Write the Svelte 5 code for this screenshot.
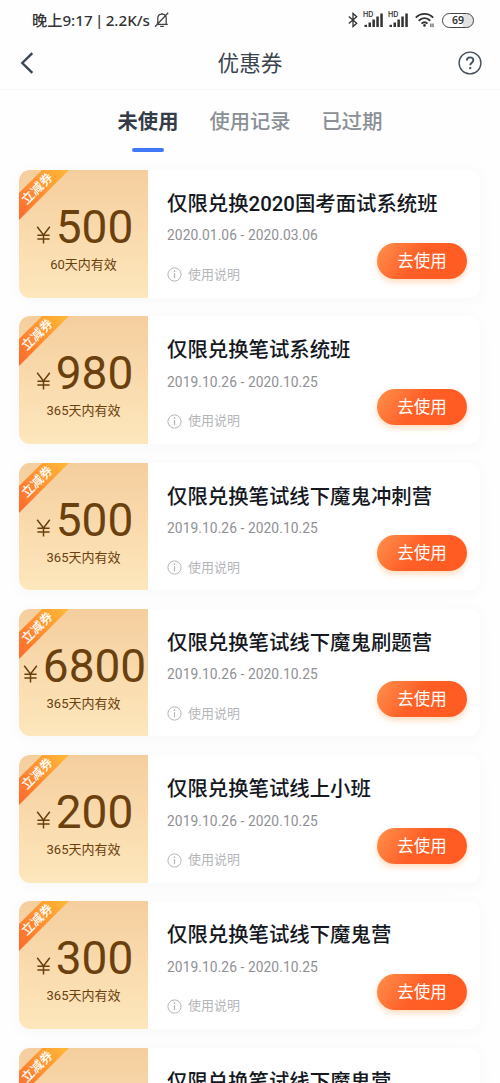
<script lang="ts">
  type Coupon = { amount: number; days: number; title: string; date: string };

  const tabs = ['未使用', '使用记录', '已过期'];
  let active = $state(0);

  const coupons: Coupon[] = [
    { amount: 500, days: 60, title: '仅限兑换2020国考面试系统班', date: '2020.01.06 - 2020.03.06' },
    { amount: 980, days: 365, title: '仅限兑换笔试系统班', date: '2019.10.26 - 2020.10.25' },
    { amount: 500, days: 365, title: '仅限兑换笔试线下魔鬼冲刺营', date: '2019.10.26 - 2020.10.25' },
    { amount: 6800, days: 365, title: '仅限兑换笔试线下魔鬼刷题营', date: '2019.10.26 - 2020.10.25' },
    { amount: 200, days: 365, title: '仅限兑换笔试线上小班', date: '2019.10.26 - 2020.10.25' },
    { amount: 300, days: 365, title: '仅限兑换笔试线下魔鬼营', date: '2019.10.26 - 2020.10.25' },
    { amount: 300, days: 365, title: '仅限兑换笔试线下魔鬼营', date: '2019.10.26 - 2020.10.25' }
  ];
</script>

{#snippet signal()}
  <span class="signal">
    <span class="hd">HD</span>
    <svg width="19" height="14" viewBox="0 0 19 14" fill="#333">
      <rect x="0.5" y="11.8" width="2.5" height="2.2" />
      <rect x="4.5" y="9.5" width="2.5" height="4.5" />
      <rect x="8.4" y="6.5" width="2.5" height="7.5" />
      <rect x="12.3" y="3.5" width="2.5" height="10.5" />
      <rect x="16.3" y="0.5" width="2.5" height="13.5" />
    </svg>
  </span>
{/snippet}

<div class="screen">
  <div class="status">
    <span class="clock">晚上9:17 | 2.2K/s</span>
    <svg class="bell" width="16" height="16" viewBox="0 0 16 16" fill="none" stroke="#444" stroke-width="1.3">
      <path d="M2.2 12.3h11.6M3.8 12V6.6C3.8 4 5.5 2.2 8 2.2s4.2 1.8 4.2 4.4V12M8 .9v1.3M6.2 14.4h3.6M1 14.8L14.2 .8" />
    </svg>
    <div class="indicators">
      <svg class="bluetooth" width="10" height="16" viewBox="0 0 10 16" fill="none" stroke="#333" stroke-width="1.3">
        <path d="M.8 4.5L8.7 11.2 5 14.6V1.4l3.7 3.4L.8 11.5" />
      </svg>
      {@render signal()}
      {@render signal()}
      <svg class="wifi" width="20" height="16" viewBox="0 0 20 16" fill="none" stroke="#333" stroke-width="1.9">
        <path d="M.8 5.6c5-5 12.4-5 17.4 0M3.7 8.7c3.5-3.3 8.1-3.3 11.6 0M6.5 11.6c1.9-1.7 4.1-1.7 6 0" />
        <circle cx="9.5" cy="13.4" r="1.3" fill="#333" stroke="none" />
        <path d="M15.9 11.5v3.6M18 11.5v3.6" stroke-width="1" />
      </svg>
      <span class="battery">69</span>
    </div>
  </div>

  <header>
    <svg width="14" height="22" viewBox="0 0 14 22" fill="none" stroke="#3b4653" stroke-width="2.4">
      <path d="M12.3 1.2L2.3 11l10 9.8" />
    </svg>
    <h1>优惠券</h1>
    <svg width="24" height="24" viewBox="0 0 24 24" fill="none" stroke="#44505c">
      <circle cx="12" cy="12" r="10.9" stroke-width="1.4" />
      <path d="M8.9 9.5C8.9 5.3 15.3 5.4 15.3 9.2c0 2.5-3.1 2.5-3.1 5.1" stroke-width="1.9" />
      <circle cx="12.2" cy="17.1" r="1.2" fill="#44505c" stroke="none" />
    </svg>
  </header>

  <nav>
    {#each tabs as tab, i}
      <button class="tab" class:active={active === i} onclick={() => (active = i)}>{tab}</button>
    {/each}
  </nav>

  <main>
    {#each coupons as coupon}
      <article>
        <div class="value">
          <span class="ribbon">立减券</span>
          <div class="amount">
            <svg width="15" height="18" viewBox="0 0 15 18" fill="none" stroke="#6a400f" stroke-width="1.5">
              <path d="M1.2 .8l6.3 8.2 6.3-8.2M7.5 9v8.5M1.4 9.2h12.2M1.4 13.1h12.2" />
            </svg>
            <span>{coupon.amount}</span>
          </div>
          <p>{coupon.days}天内有效</p>
        </div>
        <div class="info">
          <h2>{coupon.title}</h2>
          <p class="date">{coupon.date}</p>
          <div class="note">
            <svg width="15" height="15" viewBox="0 0 15 15" fill="none" stroke="#b5b6ba">
              <circle cx="7.5" cy="7.5" r="6.6" />
              <path d="M7.5 6.2v5" stroke-width="1.3" />
              <circle cx="7.5" cy="4.2" r=".9" fill="#b5b6ba" stroke="none" />
            </svg>
            <span>使用说明</span>
          </div>
        </div>
        <button class="use">去使用</button>
      </article>
    {/each}
  </main>
</div>

<style>
  :global(body) {
    margin: 0;
    background: #fefefe;
  }

  .screen {
    width: 500px;
    height: 1083px;
    overflow: hidden;
    background: #fefefe;
    font-family: Roboto, 'Noto Sans CJK SC', sans-serif;
  }

  h1,
  h2,
  p {
    margin: 0;
    font-weight: 400;
  }

  svg {
    display: block;
    flex: none;
  }

  button {
    padding: 0;
    border: 0;
    background: none;
    font-family: inherit;
  }

  .status {
    display: flex;
    align-items: center;
    height: 40px;
    padding: 0 26px 0 32px;
    box-sizing: border-box;
    color: #333;
  }

  .clock {
    font: 500 15.2px/20px 'Noto Sans', 'Noto Sans CJK SC', sans-serif;
    white-space: nowrap;
    word-spacing: -1.6px;
  }

  .bell {
    margin-left: 4px;
  }

  .indicators {
    display: flex;
    align-items: center;
    margin-left: auto;
  }

  .signal {
    position: relative;
    margin-left: 6px;
  }

  .bluetooth {
    margin-right: 0;
  }

  .hd {
    position: absolute;
    left: -1px;
    top: -1px;
    font: 600 7px/6px Inter, sans-serif;
  }

  .wifi {
    margin-left: 7px;
  }

  .battery {
    width: 32px;
    height: 15px;
    margin-left: 7px;
    box-sizing: border-box;
    border: 1.4px solid #444;
    border-radius: 8px;
    background: linear-gradient(90deg, #fefefe 68%, #e2e2e2 68%);
    font: 600 10.5px/13px 'Noto Sans', sans-serif;
    text-align: center;
  }

  header {
    display: flex;
    align-items: center;
    justify-content: space-between;
    height: 50px;
    padding: 0 18px 3px 20px;
    box-sizing: border-box;
    border-bottom: 1px solid #f7f7f8;
  }

  h1 {
    margin-left: 8px;
    padding-top: 2px;
    color: #3b4550;
    font-size: 21.6px;
    line-height: 32px;
  }

  nav {
    display: flex;
    justify-content: center;
    gap: 31px;
    height: 80px;
    padding-top: 17px;
    box-sizing: border-box;
  }

  .tab {
    display: flex;
    flex-direction: column;
    align-items: center;
    height: 46px;
    color: #8b9096;
    font-size: 20.3px;
    font-weight: 500;
    line-height: 30px;
  }

  .tab.active {
    color: #343d47;
    font-weight: 700;
  }

  .tab.active::after {
    content: '';
    width: 32px;
    height: 4px;
    margin-top: 11px;
    border-radius: 2px;
    background: #4078f8;
  }

  main {
    display: flex;
    flex-direction: column;
    gap: 18.8px;
    padding: 0 20px 0 19px;
  }

  article {
    display: flex;
    position: relative;
    flex: none;
    height: 127.5px;
    border-radius: 11px;
    background: #fff;
    box-shadow: 0 2px 16px rgba(40, 50, 70, 0.035);
  }

  .value {
    position: relative;
    width: 129px;
    overflow: hidden;
    border-radius: 11px 0 0 11px;
    background: linear-gradient(#f5ce9e, #fde7bc);
    color: #6a400f;
    text-align: center;
  }

  .ribbon {
    position: absolute;
    left: -28px;
    top: 9px;
    width: 92px;
    height: 19px;
    background: linear-gradient(90deg, #ff6a2c 15%, #ffb637 85%);
    color: #fff;
    font-size: 12.6px;
    font-weight: 500;
    line-height: 19px;
    transform: rotate(-45deg);
  }

  .amount {
    display: flex;
    align-items: flex-end;
    justify-content: center;
    gap: 5px;
    height: 54px;
    margin: 30px 0 1px 2px;
    font-size: 46px;
    line-height: 54px;
  }

  .amount svg {
    margin-bottom: 10px;
  }

  .value p {
    font-size: 13px;
    line-height: 20px;
  }

  .info {
    padding: 19px 0 0 19px;
  }

  h2 {
    color: #15181e;
    font-size: 20.4px;
    font-weight: 500;
    line-height: 30px;
    white-space: nowrap;
  }

  .date {
    margin-top: 7.4px;
    color: #8f9094;
    font-size: 13.8px;
    line-height: 18px;
    letter-spacing: 0.07px;
  }

  .note {
    display: flex;
    align-items: center;
    gap: 6px;
    margin-top: 20.6px;
    color: #b5b6ba;
    font-size: 13px;
    line-height: 20px;
  }

  .use {
    position: absolute;
    right: 13px;
    bottom: 19px;
    width: 90px;
    height: 36px;
    border-radius: 18px;
    background: linear-gradient(125deg, #ff914d, #ff5f26 45%, #ff5a22);
    box-shadow: 0 3px 6px rgba(255, 150, 60, 0.35);
    color: #fff;
    font-size: 16.5px;
    line-height: 37px;
  }
</style>
